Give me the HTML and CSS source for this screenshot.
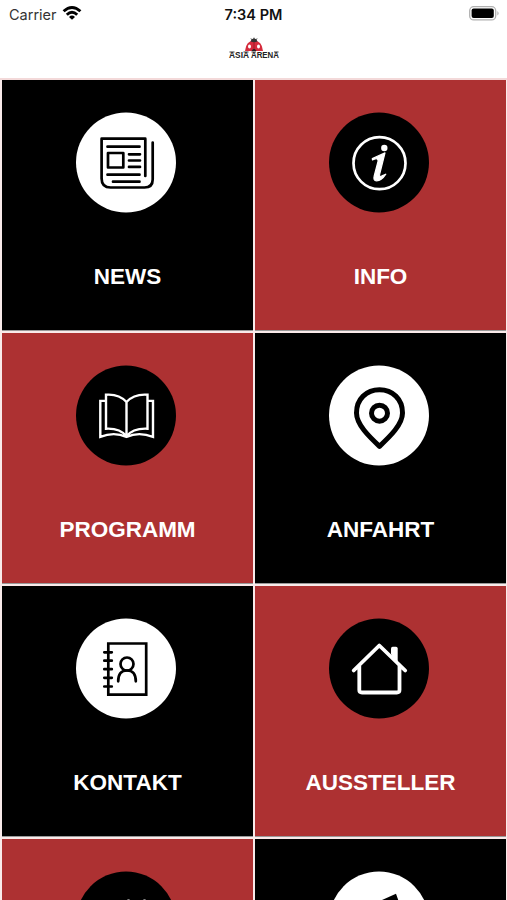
FILE: index.html
```html
<!DOCTYPE html>
<html lang="de">
<head>
<meta charset="utf-8">
<meta name="viewport" content="width=device-width, initial-scale=1">
<title>Asia Arena</title>
<link rel="stylesheet" href="styles.css">
</head>
<body>
<header class="header">
  <div class="status">
    <div class="carrier"><span class="carrier-name">Carrier</span>
      <svg class="wifi" width="20" height="16" viewBox="0 0 20 16" fill="none" stroke="#000" stroke-width="2.9"><path d="M1.600 6.300Q10-1.400 18.400 6.300"/><path d="M4.800 9.800Q10 4.800 15.200 9.800"/><path d="M10 14.800L7 11.900Q10 9.300 13 11.900Z" fill="#000" stroke="none"/></svg>
    </div>
    <div class="time">7:34 PM</div>
    <svg class="battery" width="31" height="15" viewBox="0 0 31 15"><rect x=".7" y=".7" width="26" height="13.200" rx="4" fill="#fff" stroke="#b0b0b0" stroke-width="1.300"/><rect x="2.600" y="2.600" width="22.200" height="9.400" rx="2" fill="#000"/><path d="M28.500 5Q30.500 7.300 28.500 9.600Z" fill="#999"/></svg>
  </div>
  <div class="logo">
    <svg class="ladybug" width="20" height="15" viewBox="0 0 20 15"><path d="M1 14Q2 3.500 10 3.500T19 14Z" fill="#d52b3c"/><path d="M6.500 4.500L7.500 2.500 6 1.500 9 2 10 .3 11 2 14 1.500 12.500 2.500 13.500 4.500Q10 6 6.500 4.500Z" fill="#333"/><path d="M10 5V14" stroke="#8d1820" stroke-width=".7"/><path d="M7.500 14Q10 10 12.500 14Z" fill="#222"/><g fill="#fff"><ellipse cx="5.500" cy="9.500" rx="1.500" ry="1.900"/><ellipse cx="14.500" cy="9.500" rx="1.500" ry="1.900"/></g></svg>
    <svg class="wordmark" width="56" height="14" viewBox="-3 -2 56 14"><text x="0" y="7.800" textLength="20" lengthAdjust="spacingAndGlyphs">ASIA</text><text x="22" y="7.800" textLength="28" lengthAdjust="spacingAndGlyphs">ARENA</text><path d="M.5 2H5.500M14.500 2H19.500M22.500 2H27M45 2H49.500" stroke="#222" stroke-width=".9"/></svg>
  </div>
</header>
<main class="grid">
  <a class="tile black">
    <svg class="icon" viewBox="0 0 100 101"><circle class="disc" cx="50" cy="50.500" r="50"/><g class="line"><path d="M69.300 64V26.700H25.600V66.500Q25.600 75.500 34.600 75.500H68.500Q76.700 75.500 76.700 67.500V30.500"/><path d="M31.500 34.700H63.500M53 42.300H64M53 48.500H64M53 54.900H64M31.500 62.700H63.500M37 69.700H63.500"/><path d="M32 41H47.300V55.500H32Z"/></g></svg>
    <span class="label">NEWS</span>
  </a>
  <a class="tile red">
    <svg class="icon" viewBox="0 0 100 101"><circle class="disc" cx="50" cy="50.500" r="50"/><circle class="line" cx="50.500" cy="51.200" r="26"/><circle class="solid" cx="55.300" cy="36" r="3.200"/><path class="solid bold" d="M43.300 46.500Q49 44 56 40.900L50.700 62Q50 66 53.500 63.500L56.800 62.200Q52.500 68.800 47.500 68.800Q44 68.800 45.200 64L49 49.500Q49.500 46.300 46.500 46.800L43.500 48Z"/></svg>
    <span class="label">INFO</span>
  </a>
  <a class="tile red">
    <svg class="icon" viewBox="0 0 100 101"><circle class="disc" cx="50" cy="50.500" r="50"/><path class="line thin sharp" d="M50.500 37Q43 28.700 30 29.700V63.700Q44 63 50.500 71.300Q57 63 71.500 63.700V29.700Q58 28.700 50.500 37V71.300M30 35.900H24.300V71.800Q38 66.500 50.500 71.800Q63 66.500 77 71.800V35.900H71.500"/></svg>
    <span class="label">PROGRAMM</span>
  </a>
  <a class="tile black">
    <svg class="icon" viewBox="0 0 100 101"><circle class="disc" cx="50" cy="50.500" r="50"/><g class="line thick"><path d="M50.500 81.300C40 71.500 27.500 59.500 27.500 48C27.500 34 37.500 24.800 50.500 24.800S73.500 34 73.500 48C73.500 59.500 61 71.500 50.500 81.300Z"/><circle cx="50.500" cy="48.200" r="8"/></g></svg>
    <span class="label">ANFAHRT</span>
  </a>
  <a class="tile black">
    <svg class="icon" viewBox="0 0 100 101"><circle class="disc" cx="50" cy="50.500" r="50"/><g class="line"><path class="sharp" d="M32.300 25.500H70.200V76.700H32.300Z"/><path d="M28.300 34.300H35.800M28.300 42.700H35.800M28.300 51.200H35.800M28.300 59.800H35.800M28.300 68.500H35.800"/><circle cx="51" cy="46" r="6.500"/><path d="M42.200 63.300C42.200 56 45.500 52.500 51 52.500S59.800 56 59.800 63.300"/></g></svg>
    <span class="label">KONTAKT</span>
  </a>
  <a class="tile red">
    <svg class="icon" viewBox="0 0 100 101"><circle class="disc" cx="50" cy="50.500" r="50"/><path class="solid" d="M62 36V30.500Q62 28.700 63.700 28.700H67Q68.700 28.700 68.700 30.500V48Z"/><path class="line house" d="M24.700 52.500L50.300 27.500 76.200 52.500M30.300 48V72Q30.300 74.500 33 74.500H67.800Q70.500 74.500 70.500 72V48"/></svg>
    <span class="label">AUSSTELLER</span>
  </a>
  <a class="tile red">
    <svg class="icon" viewBox="0 0 100 101"><circle class="disc" cx="50" cy="50.500" r="50"/><path class="line thin" d="M52 29.700H53M68 29.700H69"/></svg>
  </a>
  <a class="tile black">
    <svg class="icon" viewBox="0 0 100 101"><circle class="disc" cx="50" cy="50.500" r="50"/><path class="solid" d="M53 29L67 22.700 71 34H45Z"/></svg>
  </a>
</main>
</body>
</html>
```
FILE: styles.css
```css
* {
  box-sizing: border-box;
}

body {
  margin: 0;
  height: 100vh;
  display: flex;
  flex-direction: column;
  overflow: hidden;
  background: #fff;
  font-family: "Liberation Sans", Arial, sans-serif;
}

.header {
  height: 80px;
  flex: none;
  border-bottom: 2px solid #f3d9d9;
}

.status {
  height: 28px;
  padding: 0 7px 0 9px;
  display: grid;
  grid-template-columns: 1fr auto 1fr;
  align-items: center;
  font-family: Inter, sans-serif;
  font-size: 14.5px;
  color: #111;
}

.carrier {
  display: flex;
  align-items: center;
  gap: 5px;
  color: #333;
}

.time {
  font-weight: 600;
  margin-right: 2px;
}

.battery {
  justify-self: end;
  margin-top: -2px;
}

.wifi {
  margin-top: -2px;
}

.logo {
  display: flex;
  flex-direction: column;
  align-items: center;
  padding-top: 9px;
}

.wordmark {
  margin-top: -4px;
  overflow: visible;
  font: bold 8.5px "Liberation Sans", sans-serif;
  fill: #222;
}

.grid {
  flex: 1;
  min-height: 0;
  overflow: hidden;
  display: grid;
  grid-template-columns: 251px 251px;
  grid-template-rows: 251px 251px 251px 61px;
  gap: 2px;
  padding: 0 1px 0 2px;
  background: #f9eaea;
}

.tile {
  display: flex;
  flex-direction: column;
  align-items: center;
  padding-top: 32px;
  overflow: hidden;
  border-bottom: 1px solid #999;
  color: #fff;
}

.tile:nth-child(n+7) {
  border-bottom: 0;
}

.black {
  background: #000;
  --disc: #fff;
  --ink: #000;
}

.red {
  background: #ad3132;
  --disc: #000;
  --ink: #fff;
}

.icon {
  width: 100px;
  height: 101px;
  margin-right: 3px;
  flex: none;
}

.disc {
  fill: var(--disc);
}

.line {
  fill: none;
  stroke: var(--ink);
  stroke-width: 2.7;
  stroke-linecap: round;
  stroke-linejoin: round;
}

.sharp {
  stroke-linecap: butt;
  stroke-linejoin: miter;
}

.thin {
  stroke-width: 2.4;
}

.thick {
  stroke-width: 5;
}

.house {
  stroke-width: 3.8;
}

.solid {
  fill: var(--ink);
}

.bold {
  stroke: var(--ink);
  stroke-width: 1.2;
  stroke-linejoin: round;
}

.label {
  margin-top: 50px;
  font-size: 22.5px;
  line-height: 28px;
  font-weight: bold;
}
```
